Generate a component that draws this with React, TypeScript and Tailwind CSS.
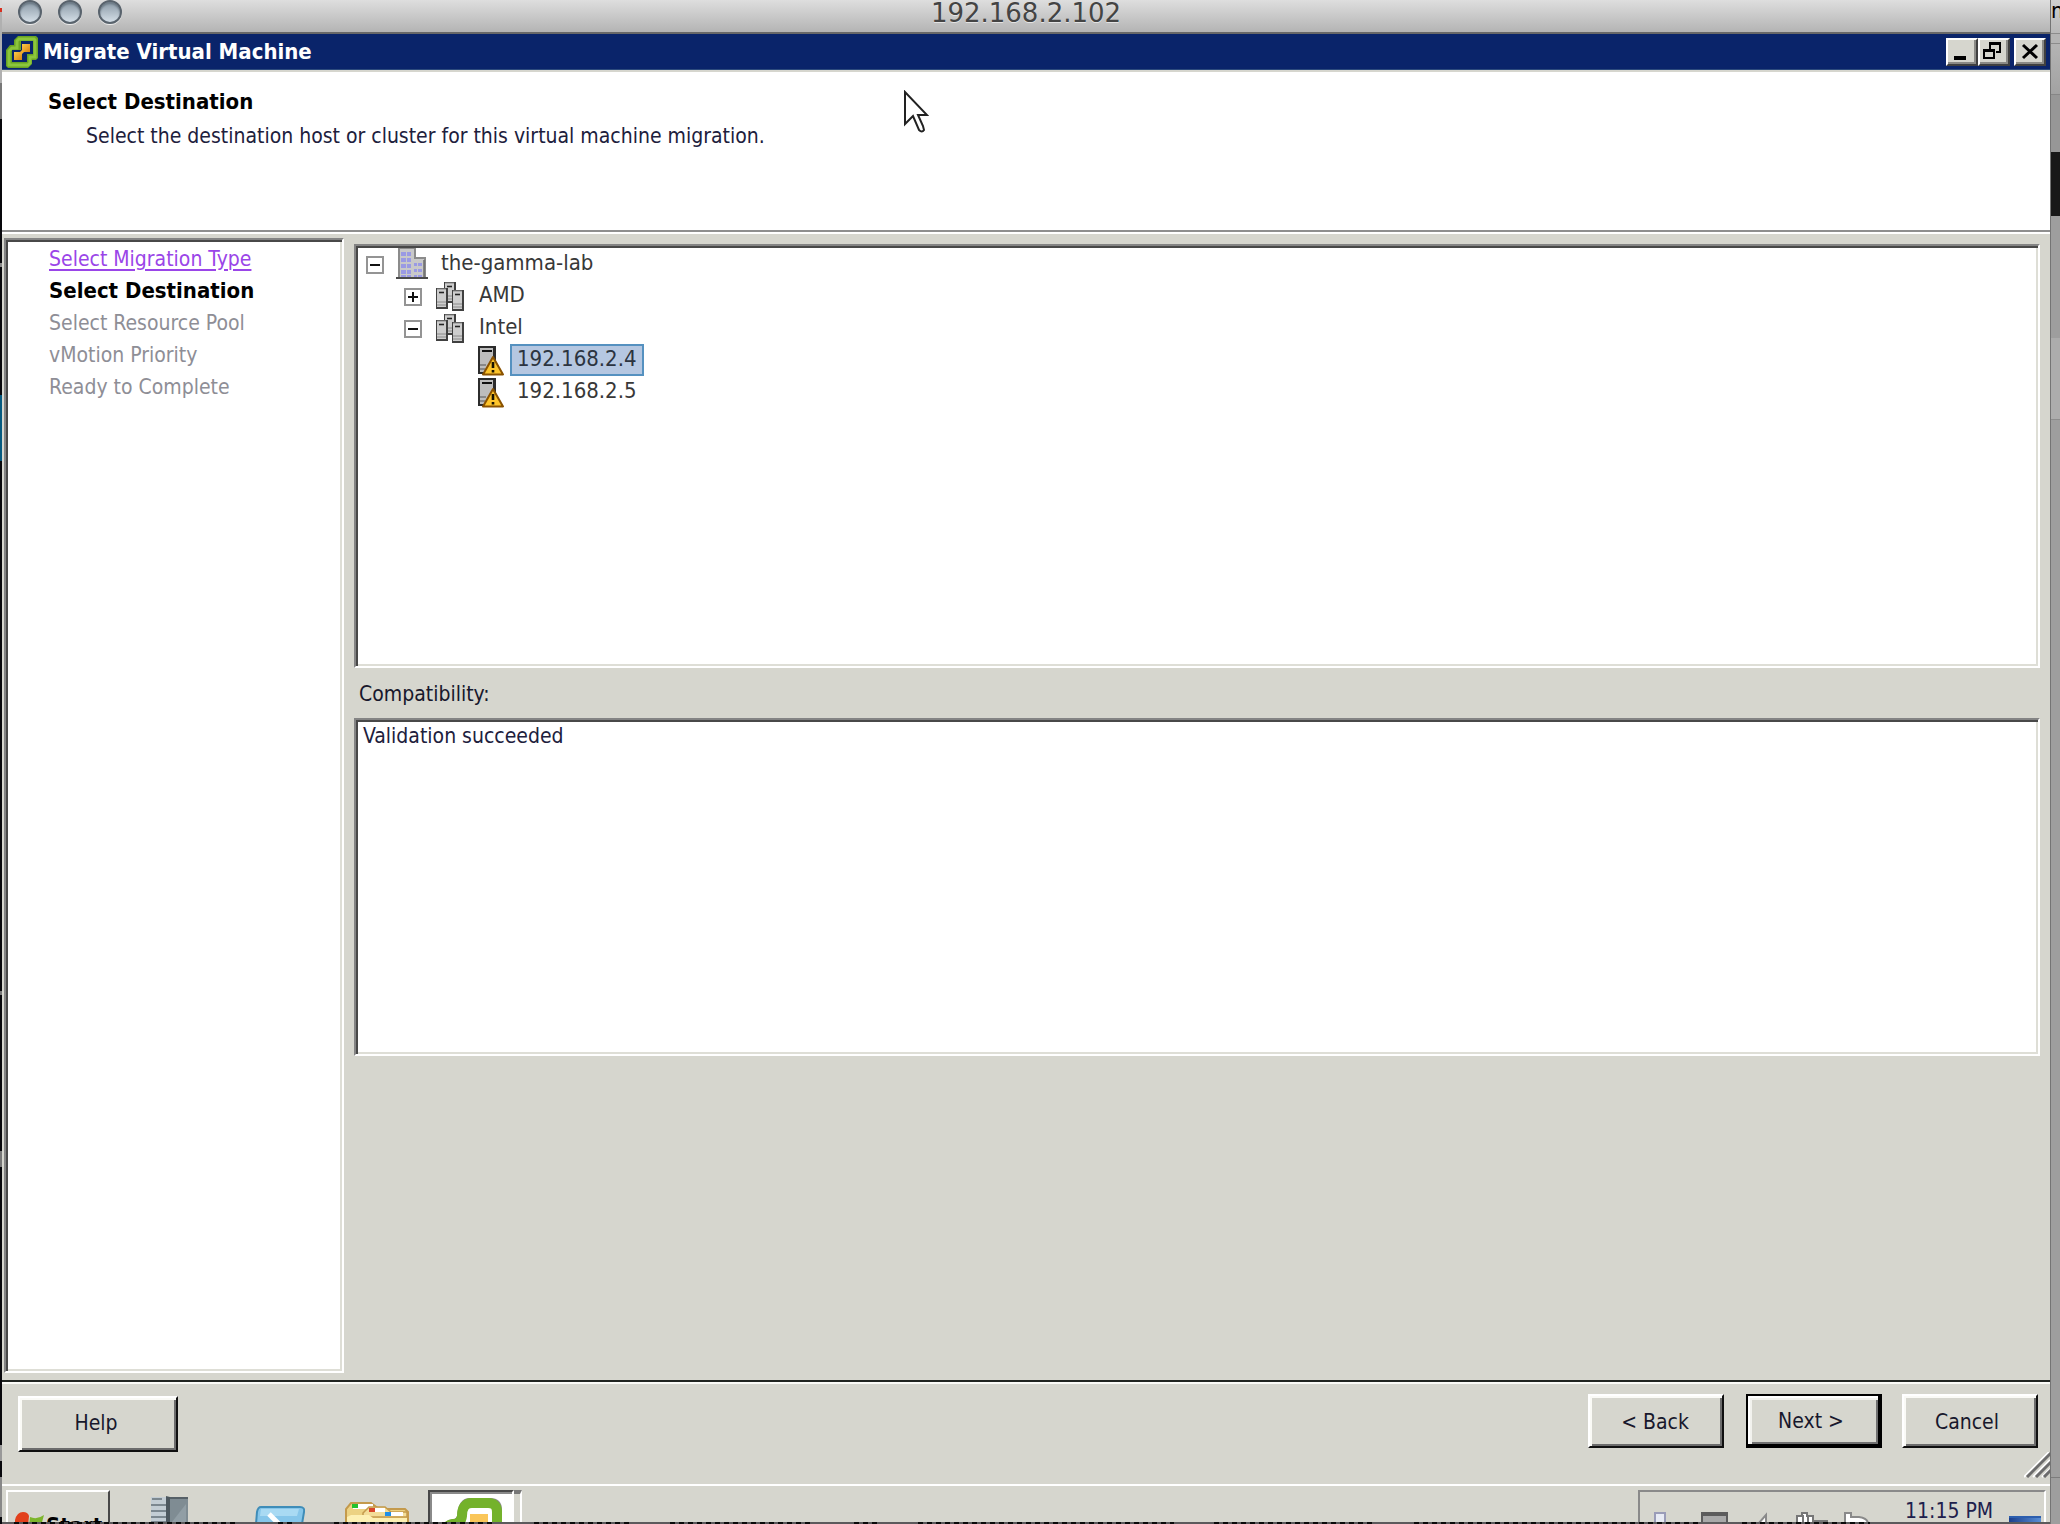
import React, { useState } from 'react';

const sunken =
  'border-2 border-t-[#848484] border-l-[#848484] border-r-white border-b-white shadow-[inset_2px_2px_0_#484848,inset_-2px_-2px_0_#deded6]';
const raised =
  'border-2 border-t-white border-l-white border-r-[#101010] border-b-[#101010] shadow-[inset_2px_2px_0_#fafaf6,inset_-2px_-2px_0_#6c6c6c]';

function VmwareLogo({ hole, className }: { hole: string; className: string }) {
  return (
    <svg viewBox="0 0 32 32" className={className} aria-hidden="true">
      <defs>
        <linearGradient id="orange" x1="0" y1="0" x2="1" y2="1">
          <stop offset="0" stopColor="#fbc94a" />
          <stop offset="1" stopColor="#d9820f" />
        </linearGradient>
      </defs>
      <path d="M12 0h18l2 2v20l-2 2h-4v4l-4 4H2l-2-2V14l4-5h4V4z" fill="#6aa324" />
      <path
        d="M13 3h15l1 1v17h-5v6l-2 2H3V15l3-3h5V5z"
        fill="none"
        stroke="#8cc63c"
        strokeWidth="3"
      />
      <path d="M15 5h12v13h-6v8H6V14h9z" fill={hole} />
      <rect x="16" y="8" width="8" height="8" fill="url(#orange)" />
      <rect x="8" y="16" width="8" height="8" fill="url(#orange)" />
      <path d="M13 17l4-4 2 2-4 4z" fill="#f0a92c" />
    </svg>
  );
}

function DatacenterIcon() {
  return (
    <svg viewBox="0 0 32 32" className="h-8 w-8" aria-hidden="true">
      <path d="M3 0h17v10h10v20H3z" fill="#c9c9c9" />
      <path d="M3 30V0h16v10h10v20" fill="none" stroke="#8b8b8b" strokeWidth="2" />
      <path d="M28 12v18" stroke="#6c6c6c" strokeWidth="1.5" />
      <g fill="#9a9ae4">
        {[4, 10, 16, 22, 27].map((y) => (
          <React.Fragment key={y}>
            <rect x="5" y={y} width="5" height="4" />
            <rect x="11" y={y} width="4" height="4" />
          </React.Fragment>
        ))}
        {[15, 21, 27].map((y) => (
          <React.Fragment key={y}>
            <rect x="18" y={y} width="3" height="3" />
            <rect x="22" y={y} width="4" height="3" />
          </React.Fragment>
        ))}
      </g>
      <rect y="29" width="32" height="2" fill="#4a4a4a" />
    </svg>
  );
}

function Tower({ x, y }: { x: number; y: number }) {
  return (
    <g>
      <rect x={x} y={y} width="12" height="21" fill="#404040" />
      <rect x={x + 1} y={y + 1} width="9" height="18" fill="#cdcdcd" />
      <path d={`M${x + 1} ${y + 1}h9`} stroke="#8a8a8a" />
      <path d={`M${x + 3} ${y + 4.5}h5`} stroke="#222" strokeWidth="1.6" />
      <path d={`M${x + 1} ${y + 14}h9M${x + 1} ${y + 17}h9`} stroke="#8a8a8a" />
    </g>
  );
}

function ClusterIcon() {
  return (
    <svg viewBox="0 0 32 32" className="h-8 w-8" aria-hidden="true">
      <Tower x={10} y={2} />
      <Tower x={2} y={8} />
      <Tower x={18} y={10} />
    </svg>
  );
}

function HostWarningIcon() {
  return (
    <svg viewBox="0 0 32 32" className="h-8 w-8" aria-hidden="true">
      <rect x="6" y="2" width="18" height="28" fill="#2c2c2c" />
      <rect x="8" y="4" width="13" height="24" fill="#bdbdbd" />
      <path d="M10 7h10" stroke="#111" strokeWidth="2" />
      <path d="M8 21h6M8 25h5" stroke="#777" strokeWidth="1.5" />
      <path d="M21 13l10 17.500H11z" fill="#fdc42a" stroke="#8a5200" strokeWidth="2" strokeLinejoin="round" />
      <path d="M21 18v6M21 26v2.500" stroke="#1a1200" strokeWidth="2.600" />
    </svg>
  );
}

type TreeNode = {
  label: string;
  kind: 'datacenter' | 'cluster' | 'host';
  level: string;
  toggle?: 'open' | 'closed';
};

const nodes: TreeNode[] = [
  { label: 'the-gamma-lab', kind: 'datacenter', level: 'pl-2', toggle: 'open' },
  { label: 'AMD', kind: 'cluster', level: 'pl-[46px]', toggle: 'closed' },
  { label: 'Intel', kind: 'cluster', level: 'pl-[46px]', toggle: 'open' },
  { label: '192.168.2.4', kind: 'host', level: 'pl-[84px]' },
  { label: '192.168.2.5', kind: 'host', level: 'pl-[84px]' },
];

function Tree() {
  const [selected, setSelected] = useState('192.168.2.4');
  return (
    <ul role="tree" aria-label="Destination" className={`h-[424px] bg-white ${sunken} p-[2px] text-[22px] text-[#383838]`}>
      {nodes.map((n) => (
        <li key={n.label} role="treeitem" aria-selected={selected === n.label} className={`flex h-8 items-center ${n.level}`}>
          {n.toggle ? (
            <button
              type="button"
              aria-label={`${n.toggle === 'open' ? 'Collapse' : 'Expand'} ${n.label}`}
              className="mt-[2px] h-[18px] w-[18px] shrink-0 border-2 border-[#949494] bg-white"
            >
              <svg viewBox="0 0 14 14" className="block h-[14px] w-[14px]">
                <path d={n.toggle === 'open' ? 'M2 7h10' : 'M2 7h10M7 2v10'} stroke="#111" strokeWidth="2" />
              </svg>
            </button>
          ) : (
            <span className="w-[18px] shrink-0" />
          )}
          <span className="ml-3 shrink-0">
            {n.kind === 'datacenter' && <DatacenterIcon />}
            {n.kind === 'cluster' && <ClusterIcon />}
            {n.kind === 'host' && <HostWarningIcon />}
          </span>
          <button
            type="button"
            onClick={() => setSelected(n.label)}
            className={
              selected === n.label
                ? 'ml-1.5 h-8 border-2 border-[#5591c0] bg-[#b5c7e1] px-[5px] pb-[2px] leading-6 text-[#2c3440]'
                : 'ml-1.5 h-8 border-2 border-transparent px-[5px] pb-[2px] leading-6'
            }
          >
            {n.label}
          </button>
        </li>
      ))}
    </ul>
  );
}

function MacTitleBar() {
  return (
    <header className="relative flex h-[34px] shrink-0 items-start border-b-2 border-[#686868] bg-linear-to-b from-[#dedede] to-[#b4b4b4] pl-4">
      <div className="flex gap-4">
        {['Close window', 'Minimize window', 'Zoom window'].map((l) => (
          <button
            key={l}
            type="button"
            aria-label={l}
            className="h-6 w-6 rounded-full border-2 border-[#59636d] bg-linear-to-b from-[#8b9aa7] to-[#d5dfe7] shadow-[0_1px_0_#eeeeee,inset_0_2px_2px_#6c7a86]"
          />
        ))}
      </div>
      <h1 className="pointer-events-none absolute inset-x-0 top-0 text-center font-['DejaVu_Sans'] text-[26px] leading-[27px] text-[#444] [text-shadow:0_1px_0_#e4e4e4]">
        192.168.2.102
      </h1>
    </header>
  );
}

const control =
  'flex h-7 w-8 items-center justify-center border-2 border-t-white border-l-white border-r-[#404040] border-b-[#404040] bg-[#d6d6ce] shadow-[inset_-2px_-2px_0_#8a8a86]';

function DialogTitleBar() {
  return (
    <div className="flex h-[36px] shrink-0 items-center border-b border-[#2c4a7c] bg-[#0a246a] pl-1 pr-1">
      <VmwareLogo hole="#0a246a" className="h-8 w-8" />
      <h2 className="ml-[5px] grow text-[22px] leading-8 font-bold text-white">Migrate Virtual Machine</h2>
      <button type="button" aria-label="Minimize" className={control}>
        <svg viewBox="0 0 24 22" className="h-[22px] w-6">
          <path d="M4 17h12" stroke="#000" strokeWidth="4" />
        </svg>
      </button>
      <button type="button" aria-label="Restore" className={control}>
        <svg viewBox="0 0 24 22" className="h-[22px] w-6" fill="none" stroke="#000" strokeWidth="2">
          <path d="M8 8V2h10v9h-4M8 3h10M2 9h10v8H2zM2 10h10" />
        </svg>
      </button>
      <button type="button" aria-label="Close" className={`${control} ml-1`}>
        <svg viewBox="0 0 24 22" className="h-[22px] w-6">
          <path d="M5 4L19 17M19 4L5 17" stroke="#000" strokeWidth="3" />
        </svg>
      </button>
    </div>
  );
}

function Pointer() {
  return (
    <svg viewBox="0 0 28 46" className="absolute top-[18px] left-[899px] h-[46px] w-7" aria-hidden="true">
      <path
        d="M4 2v32l8-8 6 14q3 3 5 0l-1-4-5-11h9z"
        fill="#fff"
        stroke="#222"
        strokeWidth="2"
      />
    </svg>
  );
}

function Footer() {
  return (
    <footer className="relative flex h-[104px] shrink-0 items-start border-t-2 border-[#202420] px-3 pl-4 pt-3 text-[21px] text-[#18182c] shadow-[inset_0_2px_0_#fafaf6]">
      <button type="button" className={`mt-[2px] h-14 w-40 bg-[#d6d6ce] pr-1 ${raised}`}>
        Help
      </button>
      <div className="ml-auto flex">
        <button type="button" className={`h-[54px] w-[136px] bg-[#d6d6ce] pt-1 pr-[2px] ${raised}`}>
          &lt; Back
        </button>
        <button
          type="button"
          className="ml-[22px] h-[54px] w-[136px] border-2 border-r-4 border-b-4 border-black bg-[#d6d6ce] pt-1 pr-1 shadow-[inset_2px_2px_0_#ffffff,inset_4px_4px_0_#f2f2ee,inset_-2px_-2px_0_#707070]"
        >
          Next &gt;
        </button>
        <button type="button" className={`ml-5 h-[54px] w-[136px] bg-[#d6d6ce] pt-1 pr-1.5 ${raised}`}>
          Cancel
        </button>
      </div>
      <svg viewBox="0 0 26 26" className="absolute right-0 bottom-1.5 h-[26px] w-[26px]" fill="none" aria-hidden="true">
        <path d="M0 25L26 -1M9 25L26 8M18 25L26 17" stroke="#fff" strokeWidth="2" />
        <path d="M3 25L27 1M12 25L27 10M20 25L27 18" stroke="#6c6c6c" strokeWidth="3" />
      </svg>
    </footer>
  );
}

function Taskbar() {
  return (
    <div className="flex h-[38px] shrink-0 items-start overflow-hidden border-t-2 border-white bg-[#d6d6ce] pl-1 pr-1">
      <button
        type="button"
        className="mt-1 flex h-11 w-[104px] shrink-0 items-start border-2 border-t-white border-l-white border-r-[#484848] border-b-[#484848] pl-1.5 text-[22px] font-bold text-black"
      >
        <svg viewBox="0 0 32 30" className="mt-5 h-[30px] w-8 shrink-0" aria-hidden="true">
          <path d="M1 8q2-8 8-8 5 0 6 4l-1 10q-6-4-13 0z" fill="#e2401c" />
          <path d="M16 5q7 3 14-2l-3 11q-6 4-12 0z" fill="#7db52c" />
        </svg>
        <span className="mt-[21px] leading-[26px]">Start</span>
      </button>
      <svg viewBox="0 0 38 28" className="mt-2.5 ml-[41px] h-7 w-[38px] shrink-0" aria-hidden="true">
        <path d="M0 1h17v27H0z" fill="#c3cdd4" />
        <path d="M1 3h10M0 9h16M0 15h16M0 21h16M0 26h16" stroke="#7c8890" strokeWidth="2" />
        <path d="M15 0l4 1v27h-4z" fill="#4d585f" />
        <path d="M19 2h18v26H19z" fill="#7f8c93" />
        <path d="M19 2h18" stroke="#566067" strokeWidth="2" />
        <path d="M21 26L35 8v20H21z" fill="#919ea5" />
      </svg>
      <svg viewBox="0 0 50 30" className="mt-5 ml-[66px] h-[30px] w-[50px] shrink-0" aria-hidden="true">
        <path d="M6 1h39q5 0 4 5l-4 24H0L2 6q1-5 4-5z" fill="#86c6ea" stroke="#3f8db8" strokeWidth="2" />
        <path d="M6 3h38l-2 7H5z" fill="#a9daf3" />
        <path d="M14 8l13 13" stroke="#fff" strokeWidth="5" />
      </svg>
      <svg viewBox="0 0 64 24" className="mt-4 ml-10 h-6 w-16 shrink-0" aria-hidden="true">
        <path d="M1 24V7l5-6h20l8 6h26l3 3v14z" fill="#ecd283" stroke="#c49a4c" strokeWidth="2" />
        <rect x="8" y="2" width="20" height="5" fill="#fff" />
        <rect x="7" y="2" width="6" height="4" fill="#22c22e" />
        <path d="M18 11l6-6h16l6 5h16v5H18z" fill="#f3dd98" stroke="#c49a4c" strokeWidth="1.500" />
        <rect x="24" y="6" width="16" height="4" fill="#fff" />
        <rect x="24" y="6" width="6" height="4" fill="#d9462a" />
        <rect x="40" y="10" width="18" height="4" fill="#fff" />
        <rect x="40" y="10" width="6" height="4" fill="#1f8fe8" />
        <path d="M2 24v-9l4-2h18l4 3h34v8z" fill="#fdf0b4" />
      </svg>
      <button
        type="button"
        aria-label="vSphere Client"
        className="mt-1 ml-[19px] h-11 w-[86px] shrink-0 border-2 border-t-[#484848] border-l-[#484848] border-r-white border-b-white bg-white shadow-[inset_2px_2px_0_#8a8a8a]"
      >
        <svg viewBox="0 0 64 40" className="mt-1 ml-2.5 h-10 w-16" aria-hidden="true">
          <path d="M3 40q0-14 10-15 5 0 6-5Q20 4 30 4h20q10 0 10 10v26" fill="none" stroke="#8a8a8a" strokeWidth="4" />
          <path d="M5 40q0-11 8-12 8 0 9-8 0-13 10-13h16q9 0 9 9v24" fill="none" stroke="#74b22b" strokeWidth="10" />
          <rect x="30" y="18" width="18" height="22" fill="#f0a92c" />
          <rect x="30" y="18" width="18" height="8" fill="#fac659" />
        </svg>
      </button>
      <span className="mt-1 h-11 w-2 shrink-0 border-t-4 border-r-2 border-t-[#777] border-r-white" />
      <div className="mt-1 ml-auto flex h-11 w-[408px] shrink-0 items-start border-2 border-t-[#8a8a8a] border-l-[#8a8a8a] border-r-white border-b-white">
        <svg viewBox="0 0 230 24" className="mt-5 ml-3.5 h-6 w-[230px] shrink-0" aria-hidden="true">
          <rect x="1" y="1" width="10" height="22" fill="#e8ebf4" stroke="#9a9cb8" strokeWidth="2" />
          <rect x="47" y="0" width="27" height="24" fill="#5c5c5c" />
          <rect x="49" y="4" width="23" height="8" fill="#a9a9a9" />
          <path d="M96 12h8l8-9v20" fill="#fff" stroke="#8a8a8a" strokeWidth="2" />
          <path d="M143 24V4h5V1h5v3h6v5h14v15z" fill="#fff" stroke="#777" strokeWidth="2" />
          <path d="M149 3v9M154 3v9" stroke="#777" strokeWidth="2" />
          <path d="M191 24V1h6v4h8q8 1 9 6h8v3" fill="#fff" stroke="#8a8a8a" strokeWidth="2" />
        </svg>
        <time className="mt-[9px] ml-[21px] text-[21px] leading-[21px] whitespace-nowrap text-[#20204c]">11:15 PM</time>
        <span className="mt-6 ml-4 h-5 w-8 shrink-0 border-t-2 border-[#2d5fae] bg-linear-to-r from-[#1c3f8c] to-[#5a8fd6]" />
      </div>
    </div>
  );
}

function LeftBackdrop() {
  return (
    <div className="flex w-[2px] shrink-0 flex-col overflow-hidden bg-[#08080c]">
      <span className="h-2 bg-[#d8d8d8]" />
      <span className="h-1 bg-[#d83020]" />
      <span className="h-[71px] bg-[#b0b0b0]" />
      <span className="h-9 bg-[#777]" />
      <span className="mt-[144px] h-1 bg-[#888]" />
      <span className="mt-32 h-[66px] bg-[#065a80]" />
      <span className="mt-[530px] h-1 bg-[#777]" />
      <span className="mt-[156px] h-4 bg-[#777]" />
      <span className="mt-[278px] h-4 bg-[#999]" />
      <span className="mt-4 h-10 bg-[#888]" />
    </div>
  );
}

function RightBackdrop() {
  return (
    <div className="flex w-[10px] shrink-0 flex-col overflow-hidden border-l border-[#747474] bg-[#9e9e9e]">
      <span className="h-[34px] shrink-0 border-b border-[#8c8c8c] bg-linear-to-b from-[#d0d0d0] to-[#b8b8b8] text-[22px] leading-[22px] text-black">
        n
      </span>
      <span className="h-[10px] shrink-0 border-b border-[#8c8c8c] bg-[#b4b4b4]" />
      <span className="h-[51px] shrink-0 border-b border-[#868686] bg-linear-to-b from-[#b4b4b4] to-[#a2a2a2]" />
      <span className="h-[57px] shrink-0 bg-[#979797]" />
      <span className="h-16 shrink-0 bg-[#181818]" />
      <span className="h-[122px] shrink-0" />
      <span className="h-[82px] shrink-0 border-b border-[#8c8c8c] bg-[#acacac]" />
      <span className="grow" />
      <span className="h-[47px] shrink-0 border-t border-[#7c7c7c]" />
    </div>
  );
}

const pending = ['Select Resource Pool', 'vMotion Priority', 'Ready to Complete'];

export default function App() {
  return (
    <div className="flex h-screen overflow-hidden font-['DejaVu_Sans_Condensed','DejaVu_Sans',sans-serif]">
      <LeftBackdrop />
      <div className="flex min-w-0 grow flex-col bg-[#d6d6ce]">
        <MacTitleBar />
        <DialogTitleBar />

        <section className="relative h-[164px] shrink-0 border-t-2 border-b-2 border-t-[#d6d6ce] border-b-white bg-white">
          <div className="flex h-full flex-col border-b-2 border-[#8e8e8e] pt-4 pl-[46px]">
            <h3 className="text-[22px] leading-7 font-bold text-black">Select Destination</h3>
            <p className="mt-[6px] pl-[38px] text-[21px] leading-7 text-[#20203c]">
              Select the destination host or cluster for this virtual machine migration.
            </p>
          </div>
          <Pointer />
        </section>

        <main className="flex min-h-0 grow pr-2.5 pl-[2px]">
          <nav aria-label="Wizard steps" className={`mt-1 mb-[7px] w-[340px] shrink-0 bg-white p-[3px] pl-[43px] text-[21px] leading-8 text-[#8e8e96] ${sunken}`}>
            <ol>
              <li>
                <a href="#migration-type" className="text-[#9a45e8] underline decoration-2 underline-offset-3">
                  Select Migration Type
                </a>
              </li>
              <li className="text-[22px] font-bold text-black" aria-current="step">
                Select Destination
              </li>
              {pending.map((p) => (
                <li key={p}>{p}</li>
              ))}
            </ol>
          </nav>
          <div className="mt-2.5 ml-2.5 flex min-w-0 grow flex-col">
            <Tree />
            <label htmlFor="compat" className="pt-3 pb-[10px] pl-[5px] text-[21px] leading-7 text-[#18182c]">
              Compatibility:
            </label>
            <textarea
              id="compat"
              readOnly
              value="Validation succeeded"
              className={`block h-[338px] w-full resize-none rounded-none bg-white px-[7px] py-[2px] text-[21px] leading-7 text-[#20203c] outline-none ${sunken}`}
            />
          </div>
        </main>

        <Footer />
        <Taskbar />
        <div className="flex h-[2px] shrink-0 gap-10 bg-[#5c5a5c] px-3">
          {['w-56', 'w-4', 'w-40', 'w-24', 'w-36', 'w-6', 'w-64', 'w-40', 'w-72', 'w-32'].map((w, i) => (
            <span key={i} className={`${w} bg-[repeating-linear-gradient(90deg,#0a0a0a_0_5px,transparent_5px_9px)]`} />
          ))}
        </div>
      </div>
      <RightBackdrop />
    </div>
  );
}
